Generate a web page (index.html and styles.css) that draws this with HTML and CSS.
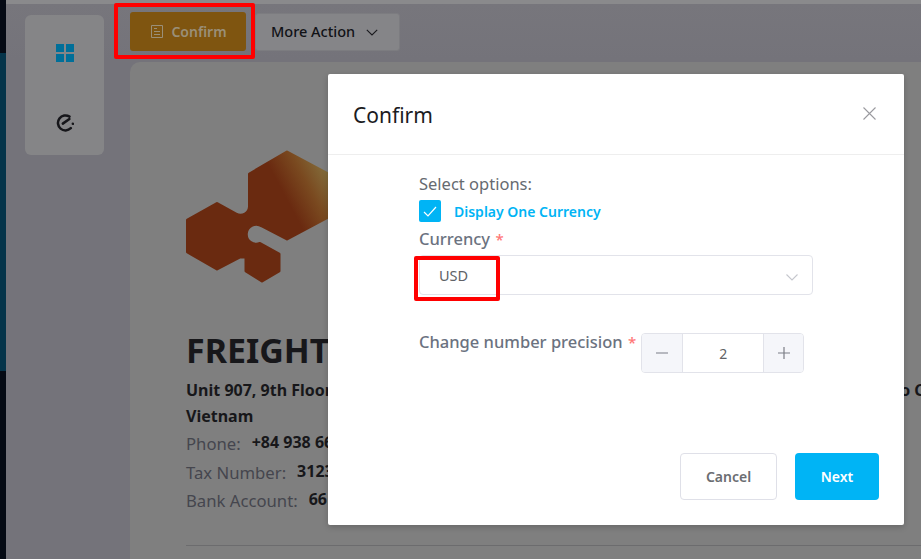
FILE: index.html
```html
<!DOCTYPE html>
<html lang="en">
<head>
    <meta charset="UTF-8">
    <meta name="viewport" content="width=device-width, initial-scale=1.0">
    <title>Confirm</title>
    <link rel="stylesheet" href="styles.css">
</head>
<body>
    <div class="page">
        <div class="rail"></div>
        <aside class="side-card">
            <svg class="side-icon" viewBox="0 0 18 18"><path fill="#006f99" d="M0 0h8v8H0zM10 0h8v8h-8zM0 10h8v8H0zM10 10h8v8h-8z"/></svg>
            <svg class="side-icon" viewBox="0 0 18 18" fill="none" stroke="#16161a" stroke-width="2.5" stroke-linecap="round"><path d="M13.500 2.600A7.500 7.500 0 1 0 14.800 14.200"/><path d="M6.800 9.600 13.400 5"/><path d="M16.800 9.800h.1"/></svg>
        </aside>
        <main class="content">
            <div class="toolbar">
                <button class="btn-confirm">
                    <svg class="doc-icon" viewBox="0 0 12 13" fill="none" stroke="#9a8f78"><path d="M.5.5h11v12H.5zM3 3.500h3M3 6.500h6M3 9.500h6"/></svg>
                    Confirm
                </button>
                <button class="btn-more">
                    More Action
                    <svg class="chev" viewBox="0 0 12 7" fill="none" stroke="#1a1a1e" stroke-width="1.1"><path d="M.8.8 6 6l5.2-5.2"/></svg>
                </button>
            </div>
            <section class="invoice">
                <svg class="logo" viewBox="186 150 142 134">
                    <defs>
                        <linearGradient id="logoFill" gradientUnits="userSpaceOnUse" x1="330" y1="172" x2="285" y2="196">
                            <stop offset="0" stop-color="#84703e"/>
                            <stop offset="0.5" stop-color="#7a4a20"/>
                            <stop offset="1" stop-color="#6a2a10"/>
                        </linearGradient>
                    </defs>
                    <path fill="url(#logoFill)" stroke="url(#logoFill)" stroke-width="3" stroke-linejoin="round" d="M287 152 330 175V216L287 239 262 226A10 10 0 1 0 260 243.500L279 254V271L262 281 246 271V257L240 257 217 269 187.500 252V220L217 203.500 236 214A9 9 0 0 0 249.500 206V174Z"/>
                </svg>
                <h1 class="company">FREIGHT</h1>
                <div class="address">
                    <span>Unit 907, 9th Floor,</span><span class="address-end">Ho C</span>
                </div>
                <div class="address">Vietnam</div>
                <div class="info-row"><span class="info-label">Phone:</span><b>+84 938 66</b></div>
                <div class="info-row"><span class="info-label">Tax Number:</span><b>3123</b></div>
                <div class="info-row"><span class="info-label">Bank Account:</span><b>66</b></div>
                <hr class="rule">
            </section>
        </main>
    </div>

    <div class="overlay-box box-confirm"></div>

    <div class="modal">
        <header class="modal-head">
            <h2>Confirm</h2>
            <svg class="close" viewBox="0 0 13 13" fill="none" stroke="#9a9a9f" stroke-width="1.1"><path d="M.5.5l12 12M12.500.5l-12 12"/></svg>
        </header>
        <div class="modal-body">
            <div class="select-title">Select options:</div>
            <label class="check-row">
                <span class="check-box">
                    <svg viewBox="0 0 14 11" fill="none" stroke="#fff" stroke-width="1.2"><path d="M1 6l4 4 8-9"/></svg>
                </span>
                Display One Currency
            </label>
            <div class="field-label">Currency <span class="req">*</span></div>
            <div class="select">
                <span>USD</span>
                <svg class="select-arrow" viewBox="0 0 12 7" fill="none" stroke="#c5c7cd" stroke-width="1.1"><path d="M.5.5 6 6 11.500.5"/></svg>
            </div>
            <div class="precision-row">
                <div class="field-label precision-label">Change number precision <span class="req">*</span></div>
                <div class="stepper">
                    <span class="step"><svg viewBox="0 0 14 14" stroke="#7b7d85" stroke-width="1.2"><path d="M1 7h12"/></svg></span>
                    <span class="step-value">2</span>
                    <span class="step step-plus"><svg viewBox="0 0 14 14" stroke="#7b7d85" stroke-width="1.2"><path d="M1 7h12M7 1v12"/></svg></span>
                </div>
            </div>
        </div>
        <footer class="modal-foot">
            <button class="btn-cancel">Cancel</button>
            <button class="btn-next">Next</button>
        </footer>
        <div class="overlay-box box-usd"></div>
    </div>
</body>
</html>
```

FILE: styles.css
```css
* {
    box-sizing: border-box;
}
html, body {
    margin: 0;
    height: 100%;
    overflow: hidden;
}
body {
    font-family: "Noto Sans", "Open Sans", sans-serif;
    position: relative;
    width: 921px;
    height: 559px;
}
button {
    font-family: inherit;
}
.page {
    display: flex;
    height: 559px;
    padding-top: 4px;
    background: linear-gradient(#8a8a8c 4px, #77767c 4px, #74737a 60px);
}
.rail {
    width: 6px;
    margin-top: -4px;
    flex: none;
    background: linear-gradient(#050a14 53px, #05344a 53px, #05344a 371px, #050a14 371px);
}
.side-card {
    flex: none;
    width: 79px;
    height: 140px;
    margin: 11px 26px 0 19px;
    padding: 29px 0 0;
    display: flex;
    flex-direction: column;
    align-items: center;
    gap: 52px;
    background: #858587;
    border-radius: 6px;
}
.side-icon {
    width: 18px;
    height: 18px;
}
.content {
    flex: 1;
    min-width: 0;
}
.toolbar {
    display: flex;
    height: 58px;
    padding-top: 8px;
    gap: 9px;
    align-items: flex-start;
}
.btn-confirm {
    display: flex;
    align-items: center;
    justify-content: center;
    gap: 8px;
    width: 116px;
    height: 39px;
    padding: 0 0 0 2px;
    border: none;
    border-radius: 3px;
    background: #7f5510;
    color: #9a8f78;
    font-size: 14px;
    font-weight: 600;
}
.doc-icon {
    width: 12px;
    height: 13px;
}
.btn-more {
    display: flex;
    align-items: center;
    gap: 11px;
    width: 145px;
    height: 38px;
    margin-top: 1px;
    padding: 0 0 2px 15px;
    border: 1px solid #7c7c80;
    border-radius: 3px;
    background: #858588;
    color: #111216;
    font-size: 14.5px;
    font-weight: 500;
}
.chev {
    width: 12px;
    height: 7px;
    margin-top: 2px;
}
.invoice {
    height: 497px;
    padding: 88px 0 0 56px;
    background: #7f7f7f;
    border-radius: 10px 0 0 0;
    color: #17171a;
    overflow: hidden;
}
.logo {
    display: block;
    width: 142px;
    height: 134px;
}
.company {
    margin: 43px 0 0;
    font-size: 34px;
    line-height: 46px;
    font-weight: 700;
    white-space: nowrap;
}
.address {
    display: flex;
    font-size: 16px;
    line-height: 26px;
    font-weight: 700;
    white-space: nowrap;
}
.company + .address {
    margin-top: 4px;
}
.address-end {
    margin-left: 554px;
}
.info-row {
    display: flex;
    align-items: flex-start;
    gap: 11px;
    height: 28.500px;
    font-size: 16px;
    line-height: 26px;
}
.info-label {
    padding-top: 2px;
    font-size: 16.700px;
    color: #45464e;
}
.rule {
    width: 100%;
    margin: 30px 0 0;
    border: none;
    border-top: 1px solid #6c6c6e;
}
.modal {
    position: absolute;
    left: 328px;
    top: 74px;
    width: 576px;
    height: 451px;
    display: flex;
    flex-direction: column;
    background: #fff;
    border-radius: 2px;
    box-shadow: 0 2px 6px rgba(0,0,0,0.2);
}
.modal-head {
    display: flex;
    align-items: center;
    justify-content: space-between;
    flex: none;
    height: 81px;
    padding: 0 28px 0 25px;
    border-bottom: 1px solid #eeeeee;
}
.modal-head h2 {
    margin: 2px 0 0;
    font-size: 21px;
    font-weight: 400;
    color: #1c1c1f;
}
.close {
    width: 13px;
    height: 13px;
    margin-top: -2px;
}
.modal-body {
    flex: 1;
    padding: 18px 91px 0;
}
.select-title {
    font-size: 16.500px;
    line-height: 22px;
    color: #666a70;
}
.check-row {
    display: flex;
    align-items: center;
    gap: 13px;
    height: 22px;
    margin-top: 5px;
    font-size: 14px;
    font-weight: 600;
    color: #00b4f5;
}
.check-box {
    display: flex;
    align-items: center;
    justify-content: center;
    width: 22px;
    height: 22px;
    background: #00b4f5;
    border-radius: 2px;
}
.check-box svg {
    width: 14px;
    height: 11px;
}
.field-label {
    font-size: 16.500px;
    line-height: 22px;
    font-weight: 500;
    color: #6b7280;
}
.req {
    margin-left: 1px;
    font-size: 15px;
    color: #f77;
}
.check-row + .field-label {
    margin-top: 6px;
}
.select {
    display: flex;
    align-items: center;
    justify-content: space-between;
    height: 40px;
    margin-top: 5px;
    padding: 0 14px 0 19px;
    border: 1px solid #e2e3ea;
    border-radius: 4px;
    font-size: 14.500px;
    color: #606266;
}
.select-arrow {
    width: 12px;
    height: 7px;
    margin-top: 4px;
}
.precision-row {
    display: flex;
    align-items: flex-start;
    gap: 5px;
    margin-top: 38px;
}
.precision-label {
    margin-top: -2px;
    line-height: 22px;
    white-space: nowrap;
}
.stepper {
    display: flex;
    width: 163px;
    height: 40px;
    border: 1px solid #e2e3ea;
    border-radius: 4px;
    overflow: hidden;
}
.step {
    display: flex;
    align-items: center;
    justify-content: center;
    width: 41px;
    flex: none;
    background: #f5f6fa;
    border-right: 1px solid #e2e3ea;
}
.step-plus {
    width: 40px;
    border-right: none;
    border-left: 1px solid #e2e3ea;
}
.step svg {
    width: 14px;
    height: 14px;
}
.step-value {
    flex: 1;
    text-align: center;
    font-size: 14px;
    line-height: 40px;
    color: #606266;
}
.modal-foot {
    display: flex;
    justify-content: flex-end;
    gap: 18px;
    flex: none;
    padding: 0 25px 25px;
}
.btn-cancel, .btn-next {
    height: 47px;
    border-radius: 4px;
    font-size: 14px;
    font-weight: 600;
}
.btn-cancel {
    width: 97px;
    background: #fff;
    border: 1px solid #dfe0e8;
    color: #6b6d72;
}
.btn-next {
    width: 84px;
    background: #00b4f5;
    border: none;
    color: #fff;
}
.overlay-box {
    position: absolute;
    border: 4px solid #f00;
    border-radius: 2px;
    pointer-events: none;
}
.box-confirm {
    left: 114px;
    top: 3px;
    width: 141px;
    height: 56px;
}
.box-usd {
    left: 86px;
    top: 182px;
    width: 86px;
    height: 45px;
}
```
